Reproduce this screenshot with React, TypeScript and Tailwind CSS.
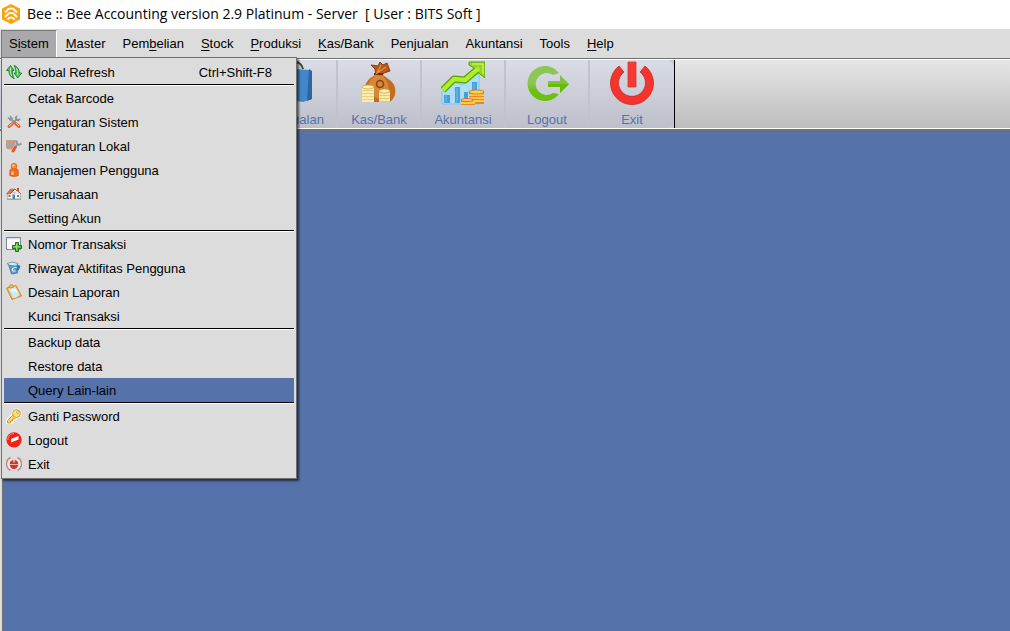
import type { ReactNode } from 'react';

type MenuItem = {
  label: string;
  icon?: ReactNode;
  shortcut?: string;
  active?: boolean;
};

const RefreshIcon = () => (
  <svg viewBox="0 0 16 16" className="size-4" aria-hidden="true">
    <path d="M4.5 1.500 8 6.500H6.300C6.200 9.500 6.600 11.500 8.200 14.500 4.800 13.500 3 11 2.900 6.500H.5z" fill="#4cc552" stroke="#16792a" strokeWidth=".9" />
    <path d="M8 1.500c3.400 1 5.200 3.500 5.300 7.500h2.300L11.800 14 8 9h1.900C10 6.500 9.600 4.500 8 1.500z" fill="#5fd060" stroke="#16792a" strokeWidth=".9" />
    <path d="M4.500 3.500v4c0 2 .5 3.500 1.300 4.500M10.500 4.500c.9 1.500 1.200 3 1.200 6" fill="none" stroke="#b5efac" />
  </svg>
);

const ToolsIcon = () => (
  <svg viewBox="0 0 16 16" className="size-4" aria-hidden="true">
    <path d="m4 4 5 5" stroke="#8e979f" strokeWidth="2" />
    <path d="M2 3.500 4.500 6 6 4.500 4 2" fill="none" stroke="#8e979f" strokeWidth="1.600" />
    <path d="m11 5-4 4" stroke="#858e98" strokeWidth="2" />
    <path d="M11 2 9.500 4 12 6.500 14 5" fill="none" stroke="#858e98" strokeWidth="1.600" />
    <path d="m6.500 9.500-3.500 3" stroke="#e2663a" strokeWidth="3" strokeLinecap="round" />
    <path d="m9.500 9.500 3.500 3" stroke="#e2663a" strokeWidth="3" strokeLinecap="round" />
    <path d="m6.500 9-3.500 3M10 9l3 3" stroke="#ffb98a" />
  </svg>
);

const LocalIcon = () => (
  <svg viewBox="0 0 16 16" className="size-4" aria-hidden="true">
    <path d="M0 2.500h10V9l-3 3H2L0 10z" fill="#c9cacc" />
    <path d="M0 3h10M0 6h9M0 9h7" stroke="#7b8187" />
    <path d="M0 4.500h9M0 7.500h8M1 10.500h5" stroke="#e9925c" />
    <path d="m7 13 2.500-4" stroke="#dc5a20" strokeWidth="3" strokeLinecap="round" />
    <path d="m9.500 8.500 3-3" stroke="#8d969f" strokeWidth="2" />
    <path d="M11 2.500 10.500 5l2.500 2 2.500-1.500" fill="none" stroke="#8d969f" strokeWidth="1.600" />
  </svg>
);

const UserIcon = () => (
  <svg viewBox="0 0 16 16" className="size-4" aria-hidden="true">
    <path d="M3.800 13.500V9.500c0-2 1-3 2.700-3h3c1.700 0 2.800 1 2.800 3v4c-2 1.200-6.500 1.200-8.500 0z" fill="#f36b1c" stroke="#d24b12" strokeWidth=".7" />
    <circle cx="8" cy="4.200" r="2.900" fill="#f78a29" stroke="#d65b15" strokeWidth=".7" />
    <path d="M5.200 9.500h2.500v3.500H5.200z" fill="#ffc077" />
    <circle cx="7.300" cy="3.500" r="1.100" fill="#ffdd9d" />
  </svg>
);

const HouseIcon = () => (
  <svg viewBox="0 0 16 16" className="size-4" aria-hidden="true">
    <path d="M1.500 7h13v6h-13z" fill="#f7f7f5" stroke="#999ca0" strokeWidth=".6" />
    <path d="M11 2h2v4h-2z" fill="#be4f38" />
    <path d="m8.500 2.500 6.500 5H11L7 3.500z" fill="#f3f3f3" />
    <path d="M4.500 3H9l-5 5H.5z" fill="#db7a50" stroke="#b4522e" strokeWidth=".5" />
    <path d="m4 8 4.800-5 6 4.700" fill="none" stroke="#b4522e" />
    <path d="M2.500 9h2v2h-2zM6.500 8.500H9V13H6.500zM11 9h2v2h-2z" fill="#56809e" />
    <path d="M1 13.200h14" stroke="#8e9c85" />
  </svg>
);

const AddIcon = () => (
  <svg viewBox="0 0 16 16" className="size-4" aria-hidden="true">
    <path d="M.5 1.500h14v12H.5z" fill="#fff" stroke="#7c8792" />
    <path d="M1 2h13v1.500H1z" fill="#d7e2eb" />
    <path d="M9.500 6.500h3v3h3v3h-3v3h-3v-3h-3v-3h3z" fill="#55c73f" stroke="#176d22" />
    <path d="M10.500 7.500v6M7.500 10.500h6" stroke="#9de782" strokeWidth=".7" />
  </svg>
);

const HistoryIcon = () => (
  <svg viewBox="0 0 16 16" className="size-4" aria-hidden="true">
    <path d="M2.500 4.500 12 5l-.5 8-6 1z" fill="#5a9fd0" stroke="#2e6892" strokeWidth=".7" />
    <path d="M1 3.500 6 2l6 1.500L10.500 6 4 5.500z" fill="#d1e8f5" stroke="#4581a8" strokeWidth=".7" />
    <path d="m11 4.500 3.500 1.500-1.500 4-3 .5" fill="#2f79b3" />
    <path d="M6 10c1.500-3 3-3 5-2M6.500 8v3h3" fill="none" stroke="#e7f4fc" />
  </svg>
);

const ReportIcon = () => (
  <svg viewBox="0 0 16 16" className="size-4" aria-hidden="true">
    <path d="m.5 4 9.500-2.500 5.500 10.500-9.500 3.500z" fill="#f5b443" stroke="#c77b1e" strokeWidth=".8" />
    <path d="m2.500 4.500 7-1.800 4 8-3.500 3-3 .3z" fill="#c9ebff" />
    <path d="m3 2.500 1.500-2 2.500.8.500 2-3.500.9z" fill="#e8c35a" stroke="#ad7a29" strokeWidth=".6" />
    <path d="m5 7 4.500-1.200L11 9" fill="none" stroke="#edf9ff" strokeWidth="1.500" />
  </svg>
);

const KeyIcon = () => (
  <svg viewBox="0 0 16 16" className="size-4" aria-hidden="true">
    <path d="m7 7-5.500 5.500v2.500h3v-2h2v-2h2l1.500-1.500" fill="#ffd35b" stroke="#fff" strokeWidth="3" />
    <circle cx="10.500" cy="5.500" r="5" fill="#fff" />
    <path d="m7 7-5.500 5.500v2.500h3v-2h2v-2h2l1.500-1.500" fill="#ffd35b" stroke="#bb8424" strokeWidth=".8" />
    <circle cx="10.500" cy="5.500" r="4" fill="#ffdc7c" stroke="#c8922e" strokeWidth=".8" />
    <circle cx="11.800" cy="4.200" r="1.200" fill="#fff" stroke="#bb8424" strokeWidth=".7" />
  </svg>
);

const StopIcon = () => (
  <svg viewBox="0 0 16 16" className="size-4" aria-hidden="true">
    <circle cx="8" cy="7.800" r="7.600" fill="#f22219" />
    <path d="M2 8C1.500 4.500 4.500 1.500 8 1.500" fill="none" stroke="#ff8a80" />
    <path d="m5 7 7.500-3v3.500L5 10.500z" fill="#fff" />
  </svg>
);

const QuitIcon = () => (
  <svg viewBox="0 0 16 16" className="size-4" aria-hidden="true">
    <path d="M4.500 1.500a7.300 7.300 0 0 0 0 13M11.500 1.500a7.300 7.300 0 0 1 0 13" fill="none" stroke="#c0837b" strokeWidth="1.500" />
    <path d="M5 3.500a5 5 0 0 0 0 9M11 3.500a5 5 0 0 1 0 9" fill="none" stroke="#f8eae8" strokeWidth="1.300" />
    <path d="M3.800 8C4 5 5.500 4 8 4s4 1 4.200 4c0 2.500-1.500 5-4.200 5s-4.200-2.500-4.200-5z" fill="#c9362f" />
    <path d="M4 8.500h8" stroke="#f0b0a8" />
    <path d="M8 3v3.500" stroke="#f6d2cc" strokeWidth="1.400" />
  </svg>
);

const BagIcon = () => (
  <svg viewBox="0 0 44 44" className="size-11" aria-hidden="true">
    <path d="M8 7 36 9l3 2v27l-9 3-22-3z" fill="#4386ca" />
    <path d="m36 8 3 2v28l-5 2z" fill="#2b65a3" />
    <path d="M17 12c-1-12 11-14 13-4" fill="none" stroke="#41443e" strokeWidth="2" />
  </svg>
);

const MoneyIcon = () => (
  <svg viewBox="0 0 44 44" className="size-11" aria-hidden="true">
    <path d="m14 4 7 1 2-4 3 3 4-2 3 8-6 2-2 2h-6l-1-6z" fill="#b95919" stroke="#8d3d12" />
    <path d="M18 14C10 18 6 25 7 34l6 7h20c7-5 7-16 1-21l-8-6z" fill="#c36b20" />
    <path d="M19 14c-7 5-9 10-9 18l12 6c11-2 13-13 4-23z" fill="#d88738" />
    <path d="M17 13h9" stroke="#6d2b0f" strokeWidth="2" />
    <path d="m24 4-4 8 9-6" fill="none" stroke="#e28c3a" strokeWidth="1.500" />
    <circle cx="23" cy="23" r="3.500" fill="none" stroke="#884315" strokeWidth="1.500" />
    <path d="M5 26h12v15H5z" fill="#e9cf77" />
    <path d="M22 30h11v11H22z" fill="#e6c96b" />
    <path d="M5 28h12M5 31h12M5 34h12M5 37h12M5 40h12M22 33h11M22 36h11M22 39h11" stroke="#fff5c2" strokeWidth="1.500" />
    <ellipse cx="11" cy="26" rx="6" ry="2" fill="#fff1a9" stroke="#bc9c43" strokeWidth=".7" />
    <ellipse cx="27.500" cy="30" rx="5.500" ry="2" fill="#fff1a9" stroke="#bc9c43" strokeWidth=".7" />
  </svg>
);

const ChartIcon = () => (
  <svg viewBox="0 0 44 44" className="size-11" aria-hidden="true">
    <path d="m1 31 12-10 8 3 12-9 5-3v31H1z" fill="#aadff9" stroke="#83c4e8" />
    <path d="M3 34h6v8H3zM14 26h5v16h-5zM23 31h4v11h-4zM31 21h5v21h-5z" fill="#4b9ddc" />
    <path d="M5 33v8M16 27v14M33 22v9" stroke="#79bdeb" />
    <path d="m2 29 11-11 11 1 14-12" fill="none" stroke="#5b9f0c" strokeWidth="7" strokeLinejoin="round" />
    <path d="M28 1h16v16l-5-4-6-6-5-3z" fill="#91d91c" stroke="#5b9f0c" />
    <path d="m2 29 11-11 11 1L38 7" fill="none" stroke="#aeef28" strokeWidth="4.500" strokeLinejoin="round" />
    <path d="M31 3h11v10" fill="none" stroke="#dcff84" />
    <path d="M28 31h15v12H28z" fill="#e98a20" />
    <path d="M20 39h14v5H20z" fill="#e98a20" />
    <path d="M28 34h15M28 37h15M28 40h15M20 42h14" stroke="#ffdc5f" strokeWidth="1.300" />
    <ellipse cx="35.500" cy="31" rx="7.500" ry="2" fill="#ffd058" stroke="#c96a14" strokeWidth=".8" />
    <ellipse cx="26" cy="39" rx="6.500" ry="1.500" fill="#ffd058" stroke="#c96a14" strokeWidth=".8" />
  </svg>
);

const LogoutIcon = () => (
  <svg viewBox="0 0 44 44" className="size-11" aria-hidden="true">
    <defs>
      <linearGradient id="leaf" x1="0" y1="0" x2="0" y2="1">
        <stop offset=".5" stopColor="#8dc556" />
        <stop offset=".7" stopColor="#6cbf0f" />
      </linearGradient>
    </defs>
    <path d="M34 12A17.500 17.500 0 1 0 34 33l-6-1A11 11 0 1 1 28 14z" fill="url(#leaf)" />
    <path d="M23 20h12v-6l9 9-9 9v-6H23z" fill="#7fc043" />
    <path d="M23 23h21l-9 9v-6H23z" fill="#67bc05" />
  </svg>
);

const PowerIcon = () => (
  <svg viewBox="0 0 44 44" className="size-11" aria-hidden="true">
    <path d="m9 5 5 6a13.500 13.500 0 1 0 16 0l5-6a21.500 21.500 0 1 1-26 0z" fill="#f6342e" stroke="#c42b27" strokeWidth=".8" />
    <path d="M18 1h8v25h-8z" fill="#fb3933" stroke="#d23530" strokeWidth=".8" />
  </svg>
);

const BeeLogo = () => (
  <svg viewBox="0 0 20 20" className="size-5 shrink-0" aria-hidden="true">
    <path d="m10 0 9 4.500v11L10 20l-9-4.500v-11z" fill="#fca311" />
    <path d="M4 8.500 7.500 5q2.500-1.300 5 0L16 8.500M4 13l3.500-3.500q2.500-1.300 5 0L16 13M6.500 15.500l1.500-1.500q2-1.200 4 0l1.500 1.500" fill="none" stroke="#fff" strokeWidth="1.800" />
  </svg>
);

// [before, mnemonic, after]
const menus = [
  ['S', 'i', 'stem'],
  ['', 'M', 'aster'],
  ['Pem', 'b', 'elian'],
  ['', 'S', 'tock'],
  ['', 'P', 'roduksi'],
  ['', 'K', 'as/Bank'],
  ['Penjualan', '', ''],
  ['Akuntansi', '', ''],
  ['Tools', '', ''],
  ['', 'H', 'elp'],
];

const groups: MenuItem[][] = [
  [{ label: 'Global Refresh', icon: <RefreshIcon />, shortcut: 'Ctrl+Shift-F8' }],
  [
    { label: 'Cetak Barcode' },
    { label: 'Pengaturan Sistem', icon: <ToolsIcon /> },
    { label: 'Pengaturan Lokal', icon: <LocalIcon /> },
    { label: 'Manajemen Pengguna', icon: <UserIcon /> },
    { label: 'Perusahaan', icon: <HouseIcon /> },
    { label: 'Setting Akun' },
  ],
  [
    { label: 'Nomor Transaksi', icon: <AddIcon /> },
    { label: 'Riwayat Aktifitas Pengguna', icon: <HistoryIcon /> },
    { label: 'Desain Laporan', icon: <ReportIcon /> },
    { label: 'Kunci Transaksi' },
  ],
  [{ label: 'Backup data' }, { label: 'Restore data' }, { label: 'Query Lain-lain', active: true }],
  [
    { label: 'Ganti Password', icon: <KeyIcon /> },
    { label: 'Logout', icon: <StopIcon /> },
    { label: 'Exit', icon: <QuitIcon /> },
  ],
];

const tools = [
  { label: 'Penjualan', icon: <BagIcon /> },
  { label: 'Kas/Bank', icon: <MoneyIcon /> },
  { label: 'Akuntansi', icon: <ChartIcon /> },
  { label: 'Logout', icon: <LogoutIcon /> },
  { label: 'Exit', icon: <PowerIcon /> },
];

const SystemMenu = () => (
  <div
    role="menu"
    className="absolute left-0 top-full z-10 w-[296px] border border-[#707070] bg-[#dcdcdc] p-0.5 shadow-[2px_2px_2px_rgba(0,0,0,0.6)]"
  >
    {groups.map((group, index) => (
      <div key={group[0].label} role="group" className={index > 0 ? 'border-t border-black' : ''}>
        <div className={index > 0 ? 'border-t border-white' : ''}>
          {group.map((item) => (
            <button
              key={item.label}
              type="button"
              role="menuitem"
              className={`flex h-6 w-full items-center gap-1.5 pl-0.5 pr-[22px] text-left ${
                item.active ? 'bg-[#5572ab]' : ''
              }`}
            >
              <span className="size-4 shrink-0">{item.icon}</span>
              <span className="flex-1 pt-0.5">{item.label}</span>
              {item.shortcut && <span className="pt-0.5">{item.shortcut}</span>}
            </button>
          ))}
        </div>
      </div>
    ))}
  </div>
);

export default function App() {
  return (
    <div className="flex min-h-screen flex-col bg-[#dcdcdc] font-['Liberation_Sans',Arial,sans-serif] text-[13px] leading-4 text-black">
      <header className="flex h-[29px] items-center gap-1.5 bg-white pb-0.5 pl-px">
        <BeeLogo />
        <h1 className="whitespace-pre font-['Open_Sans','Noto_Sans',sans-serif] text-[14px] leading-5">
          Bee :: Bee Accounting version 2.9 Platinum - Server  [ User : BITS Soft ]
        </h1>
      </header>

      <nav className="relative ml-px flex h-7 gap-px pt-px" role="menubar">
        {menus.map(([before, key, after], index) => (
          <button
            key={before + key + after}
            type="button"
            role="menuitem"
            className={
              index === 0
                ? 'border-l border-r border-t border-l-[#777] border-r-white border-t-[#777] bg-[#a9a9ac] px-[7px]'
                : 'px-2'
            }
          >
            {before}
            {key && <span className="underline underline-offset-2">{key}</span>}
            {after}
          </button>
        ))}
        <SystemMenu />
      </nav>

      <div className="mt-px flex h-[73px] border-b-2 border-t border-[#707070] bg-white py-px">
        <div className="border-r border-black bg-[#c8c8c8]">
          <div className="flex h-full rounded-r-lg bg-linear-to-b from-[#dadce5] to-[#bdc0ca] pl-[254px]">
            {tools.map((tool) => (
              <button
                key={tool.label}
                type="button"
                className="flex w-21 flex-col items-center justify-between border-r-2 border-[#c1c3cc] pt-px text-[#5572ab] last:border-r-0"
              >
                {tool.icon}
                <span>{tool.label}</span>
              </button>
            ))}
          </div>
        </div>
        <div className="flex-1 bg-linear-to-b from-[#e6e6e6] to-[#bdbdbd]" />
      </div>

      <main className="ml-0.5 flex-1 border-l border-[#707070] bg-[#5572ab]" />
    </div>
  );
}
